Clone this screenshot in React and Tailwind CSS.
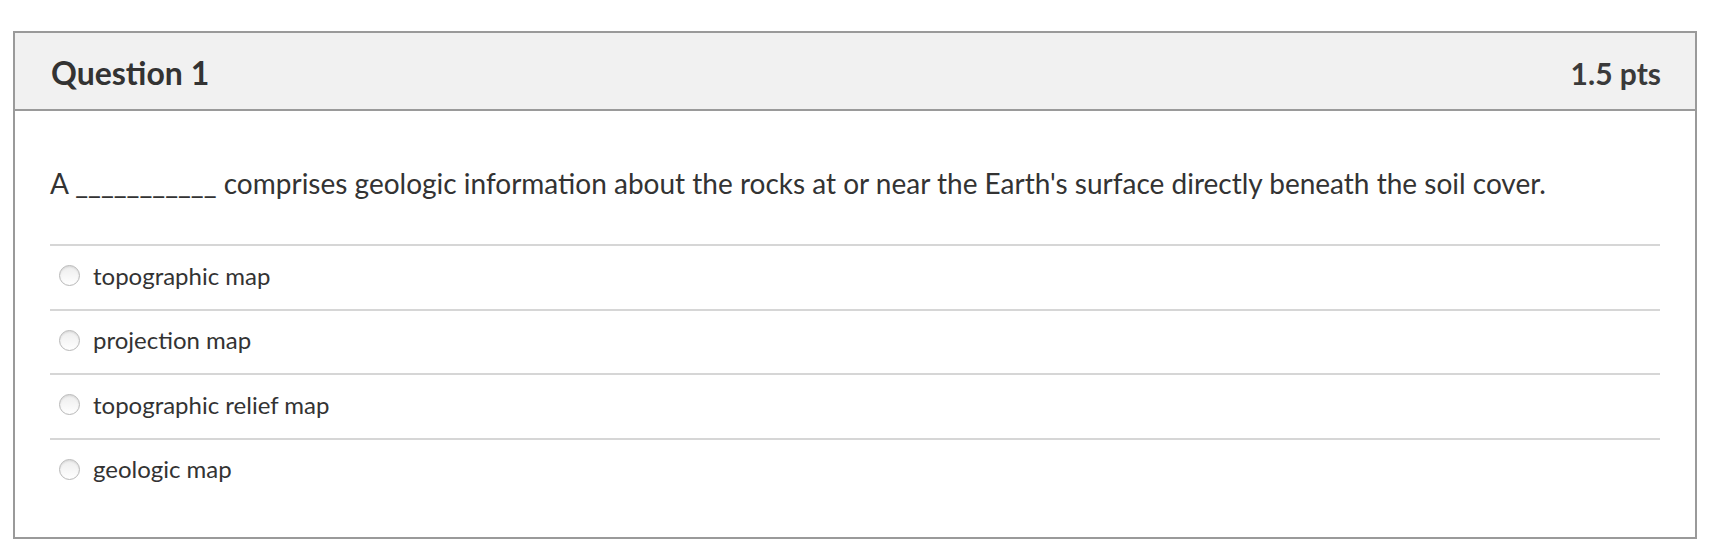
import React from 'react';

const answers = ['topographic map', 'projection map', 'topographic relief map', 'geologic map'];

const Radio = () => (
  <span className="inline-block w-[21px] h-[21px] rounded-full border border-[#b8b8b8] bg-gradient-to-b from-[#ededed] to-white shadow-[inset_0_1px_2px_rgba(0,0,0,0.1)] shrink-0" />
);

export default function App() {
  return (
    <div className="bg-white w-[1714px] h-[550px] pt-[31px] pl-[13px] font-['Lato','Open_Sans',sans-serif] text-[#333]">
      <div className="w-[1684px] h-[508px] border-2 border-[#9a9a9a] bg-white flex flex-col">
        <div className="h-[78px] bg-[#f1f1f1] border-b-2 border-[#9a9a9a] flex items-center justify-between pl-[36px] pr-[34px] pt-[4px]">
          <h2 className="text-[32px] font-bold">Question 1</h2>
          <span className="text-[30px] font-bold text-[#3a3a3a]">1.5 pts</span>
        </div>
        <div className="px-[35px] pt-[54px]">
          <p className="text-[28px] leading-[36px] mb-[43px]">
            A ___________ comprises geologic information about the rocks at or near the Earth's surface directly beneath the soil cover.
          </p>
          {answers.map(a => (
            <div key={a} className="border-t-2 border-[#d6d6d6] h-[64.5px] pb-[3px] flex items-center gap-[13px] pl-[9px]">
              <Radio />
              <span className="text-[24px]">{a}</span>
            </div>
          ))}
        </div>
      </div>
    </div>
  );
}
